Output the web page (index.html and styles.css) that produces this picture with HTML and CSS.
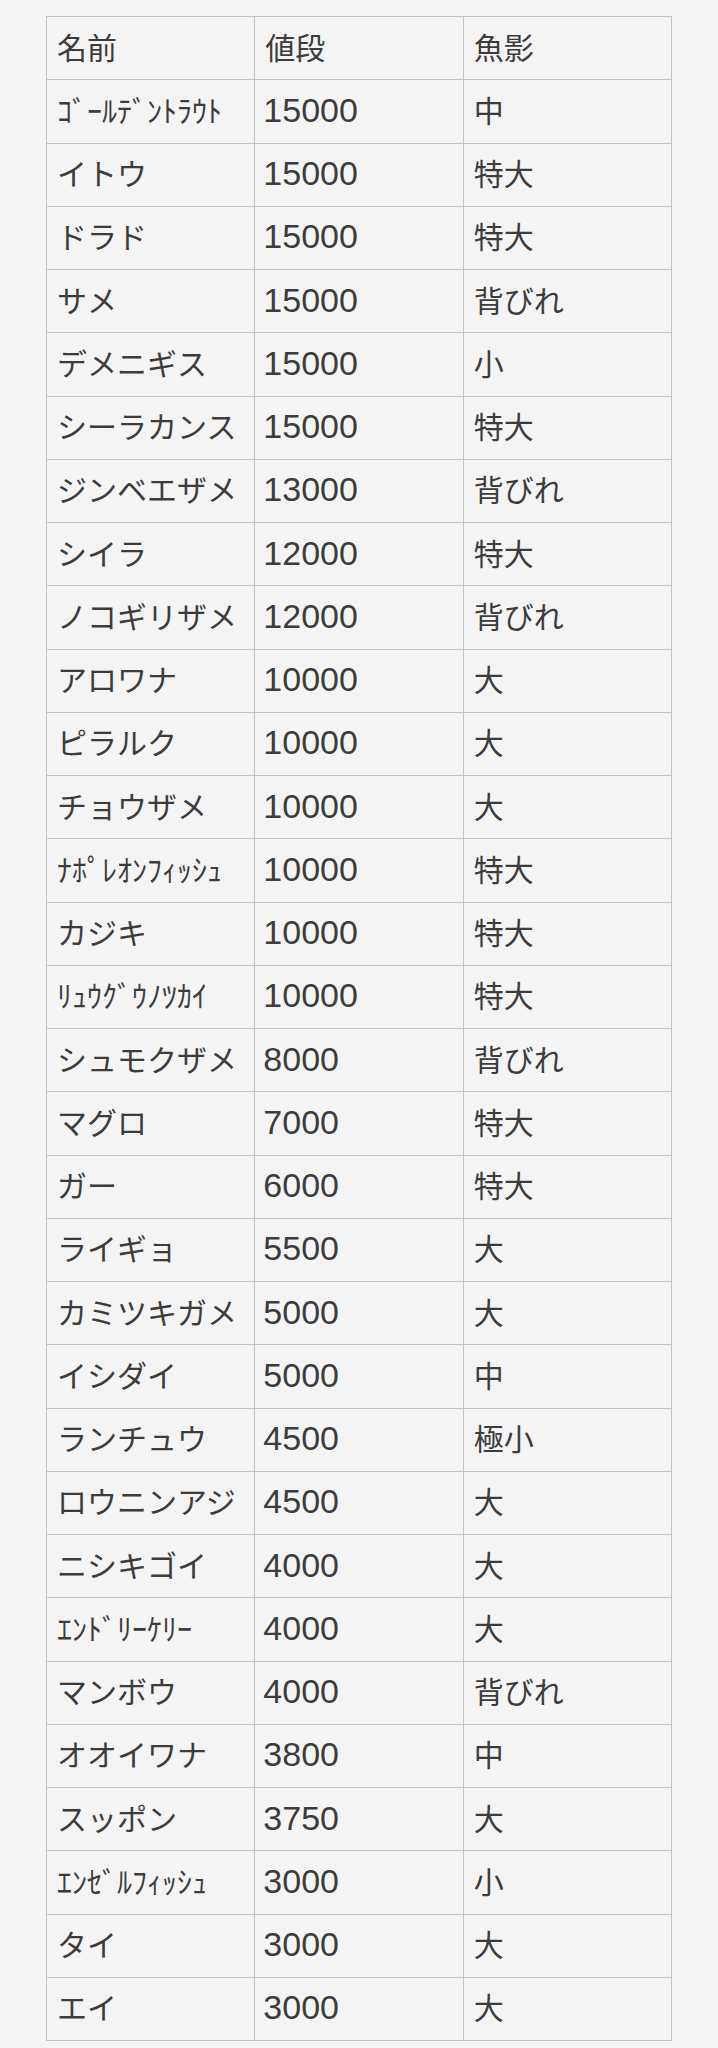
FILE: index.html
```html
<!DOCTYPE html>
<html lang="ja">
<head>
<meta charset="utf-8">
<title>魚の値段</title>
<link rel="stylesheet" href="styles.css">
</head>
<body>
<table class="fish">
<colgroup><col class="c1"><col class="c2"><col class="c3"></colgroup>
<tr><td>名前</td><td>値段</td><td>魚影</td></tr>
<tr><td class="hw">ｺﾞｰﾙﾃﾞﾝﾄﾗｳﾄ</td><td class="num">15000</td><td>中</td></tr>
<tr><td>イトウ</td><td class="num">15000</td><td>特大</td></tr>
<tr><td>ドラド</td><td class="num">15000</td><td>特大</td></tr>
<tr><td>サメ</td><td class="num">15000</td><td>背びれ</td></tr>
<tr><td>デメニギス</td><td class="num">15000</td><td>小</td></tr>
<tr><td>シーラカンス</td><td class="num">15000</td><td>特大</td></tr>
<tr><td>ジンベエザメ</td><td class="num">13000</td><td>背びれ</td></tr>
<tr><td>シイラ</td><td class="num">12000</td><td>特大</td></tr>
<tr><td>ノコギリザメ</td><td class="num">12000</td><td>背びれ</td></tr>
<tr><td>アロワナ</td><td class="num">10000</td><td>大</td></tr>
<tr><td>ピラルク</td><td class="num">10000</td><td>大</td></tr>
<tr><td>チョウザメ</td><td class="num">10000</td><td>大</td></tr>
<tr><td class="hw">ﾅﾎﾟﾚｵﾝﾌｨｯｼｭ</td><td class="num">10000</td><td>特大</td></tr>
<tr><td>カジキ</td><td class="num">10000</td><td>特大</td></tr>
<tr><td class="hw">ﾘｭｳｸﾞｳﾉﾂｶｲ</td><td class="num">10000</td><td>特大</td></tr>
<tr><td>シュモクザメ</td><td class="num">8000</td><td>背びれ</td></tr>
<tr><td>マグロ</td><td class="num">7000</td><td>特大</td></tr>
<tr><td>ガー</td><td class="num">6000</td><td>特大</td></tr>
<tr><td>ライギョ</td><td class="num">5500</td><td>大</td></tr>
<tr><td>カミツキガメ</td><td class="num">5000</td><td>大</td></tr>
<tr><td>イシダイ</td><td class="num">5000</td><td>中</td></tr>
<tr><td>ランチュウ</td><td class="num">4500</td><td>極小</td></tr>
<tr><td>ロウニンアジ</td><td class="num">4500</td><td>大</td></tr>
<tr><td>ニシキゴイ</td><td class="num">4000</td><td>大</td></tr>
<tr><td class="hw">ｴﾝﾄﾞﾘｰｹﾘｰ</td><td class="num">4000</td><td>大</td></tr>
<tr><td>マンボウ</td><td class="num">4000</td><td>背びれ</td></tr>
<tr><td>オオイワナ</td><td class="num">3800</td><td>中</td></tr>
<tr><td>スッポン</td><td class="num">3750</td><td>大</td></tr>
<tr><td class="hw">ｴﾝｾﾞﾙﾌｨｯｼｭ</td><td class="num">3000</td><td>小</td></tr>
<tr><td>タイ</td><td class="num">3000</td><td>大</td></tr>
<tr><td>エイ</td><td class="num">3000</td><td>大</td></tr>
</table>
</body>
</html>
```

FILE: styles.css
```css
html, body {
  margin: 0;
  padding: 0;
  background: #f5f4f5;
}
body {
  padding-top: 16px;
  font-family: "Noto Sans CJK JP", "Noto Sans", sans-serif;
  color: #3c3c3c;
}
.fish {
  width: 626px;
  margin: 0 auto;
  border-collapse: collapse;
  table-layout: fixed;
  border: 1px solid #c4c4c6;
}
.fish col { width: 33.333%; }
.fish tr { height: 63.25px; }
.fish td {
  border: 1px solid #c4c4c6;
  padding: 0 10px 5px;
  font-size: 30px;
  line-height: 1;
  vertical-align: middle;
  white-space: nowrap;
  overflow: hidden;
}
.fish td.num {
  font-family: "Liberation Sans", Arial, sans-serif;
  font-size: 34px;
  padding: 0 10px 3px 8px;
}
```
